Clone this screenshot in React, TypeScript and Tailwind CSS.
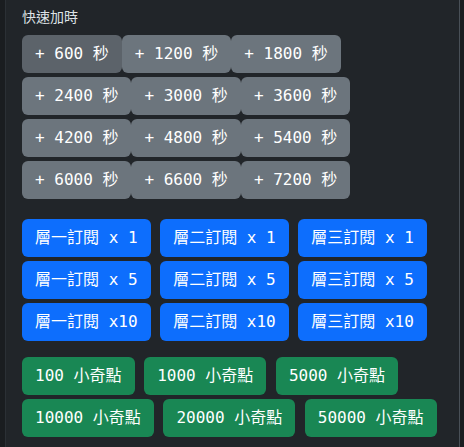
const mono = { fontFamily: '"DejaVu Sans Mono", "Noto Sans CJK TC", monospace' };

const timeRows = [
  [600, 1200, 1800],
  [2400, 3000, 3600],
  [4200, 4800, 5400],
  [6000, 6600, 7200],
];

const tiers = ['層一', '層二', '層三'];
const subCounts = ['x 1', 'x 5', 'x10'];

const pointRows = [
  [100, 1000, 5000],
  [10000, 20000, 50000],
];

const btn =
  'rounded-md border border-transparent px-3 py-1.5 text-base leading-6 text-white whitespace-pre';

export default function App() {
  return (
    <div className="flex h-[447px] w-[464px] bg-[#1a1d20]">
      <div className="ml-[5px] w-[455px] border-l border-r border-l-[#2b3035] border-r-[#495057] bg-[#212529] px-4 pt-[7px]">
        <div
          className="mb-2 text-sm leading-5 text-[#dee2e6]"
          style={{ fontFamily: '"Noto Sans", "Noto Sans CJK TC", sans-serif' }}
        >
          快速加時
        </div>

        <div className="flex flex-col gap-1">
          {timeRows.map((row, r) => (
            <div key={r} className="flex">
              {row.map((s, i) => (
                <button
                  key={s}
                  className={`${btn} ${r === 0 && i === 0 ? 'bg-[#5c636a]' : 'bg-[#6c757d]'}`}
                  style={mono}
                >
                  {`+ ${s} 秒`}
                </button>
              ))}
            </div>
          ))}
        </div>

        <div className="mt-5 flex flex-col gap-1">
          {subCounts.map((c) => (
            <div key={c} className="flex gap-[9.6px]">
              {tiers.map((t) => (
                <button key={t} className={`${btn} bg-[#0d6efd]`} style={mono}>
                  {`${t}訂閱 ${c}`}
                </button>
              ))}
            </div>
          ))}
        </div>

        <div className="mt-4 flex flex-col gap-1">
          {pointRows.map((row, r) => (
            <div key={r} className="flex gap-[9.6px]">
              {row.map((p) => (
                <button key={p} className={`${btn} bg-[#198754]`} style={mono}>
                  {`${p} 小奇點`}
                </button>
              ))}
            </div>
          ))}
        </div>
      </div>
    </div>
  );
}
